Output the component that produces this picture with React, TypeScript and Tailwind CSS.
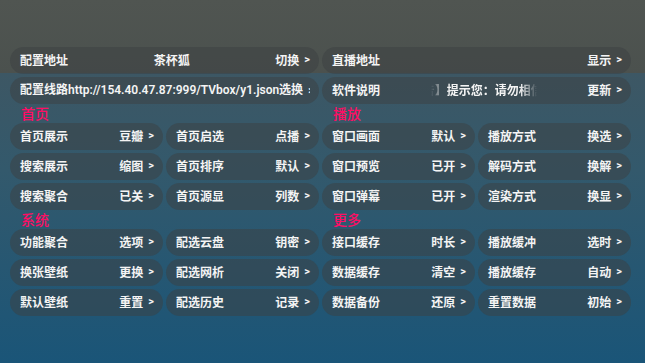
import React from "react";

type Item = { label: string; value: string };

const FONT = "font-['Roboto','Noto_Sans_CJK_SC',sans-serif]";

function Arrow() {
  return <span className="ml-[5px] text-[11px] font-bold">&gt;</span>;
}

const PILL =
  "flex h-[27px] items-center rounded-full bg-[#3b3f42]/50 pl-[10px] pr-[9px] text-[12px] font-semibold text-[#f4f4f4]";

function Pill({ label, value }: Item) {
  return (
    <div className={PILL}>
      <span className="whitespace-nowrap">{label}</span>
      <span className="flex-1" />
      <span className="flex items-center whitespace-nowrap">
        {value}
        <Arrow />
      </span>
    </div>
  );
}

function SectionLabel({ text }: { text: string }) {
  return (
    <div className="col-span-2 h-[13px] pl-[11px] text-[14px] leading-[14px] font-medium text-[#ff0d64]">
      {text}
    </div>
  );
}

const block1: Item[][] = [
  [
    { label: "首页展示", value: "豆瓣" },
    { label: "首页启选", value: "点播" },
    { label: "窗口画面", value: "默认" },
    { label: "播放方式", value: "换选" },
  ],
  [
    { label: "搜索展示", value: "缩图" },
    { label: "首页排序", value: "默认" },
    { label: "窗口预览", value: "已开" },
    { label: "解码方式", value: "换解" },
  ],
  [
    { label: "搜索聚合", value: "已关" },
    { label: "首页源显", value: "列数" },
    { label: "窗口弹幕", value: "已开" },
    { label: "渲染方式", value: "换显" },
  ],
];

const block2: Item[][] = [
  [
    { label: "功能聚合", value: "选项" },
    { label: "配选云盘", value: "钥密" },
    { label: "接口缓存", value: "时长" },
    { label: "播放缓冲", value: "选时" },
  ],
  [
    { label: "换张壁纸", value: "更换" },
    { label: "配选网析", value: "关闭" },
    { label: "数据缓存", value: "清空" },
    { label: "播放缓存", value: "自动" },
  ],
  [
    { label: "默认壁纸", value: "重置" },
    { label: "配选历史", value: "记录" },
    { label: "数据备份", value: "还原" },
    { label: "重置数据", value: "初始" },
  ],
];

export default function App() {
  return (
    <div
      className={`h-[363px] w-[645px] overflow-hidden bg-[linear-gradient(180deg,#505551_0px,#4b514e_73px,#3d5764_73px,#33596c_170px,#1a5578_363px)] ${FONT}`}
    >
      <div className="grid grid-cols-4 gap-x-[3px] gap-y-[3px] pl-[10px] pr-[14px] pt-[47px]">
        {/* row 1 */}
        <div className={`col-span-2 ${PILL}`}>
          <span className="whitespace-nowrap">配置地址</span>
          <span className="flex-1 text-center whitespace-nowrap">茶杯狐</span>
          <span className="flex items-center whitespace-nowrap">
            切换
            <Arrow />
          </span>
        </div>
        <div className={`col-span-2 ${PILL}`}>
          <span className="whitespace-nowrap">直播地址</span>
          <span className="flex-1" />
          <span className="flex items-center whitespace-nowrap">
            显示
            <Arrow />
          </span>
        </div>

        {/* row 2 */}
        <div className={`col-span-2 ${PILL}`}>
          <div className="min-w-0 flex-1 overflow-hidden whitespace-nowrap">
            配置线路http://154.40.47.87:999/TVbox/y1.json选换
            <span className="ml-[5px] text-[11px] font-bold">&gt;</span>
          </div>
        </div>
        <div className={`col-span-2 ${PILL}`}>
          <span className="whitespace-nowrap">软件说明</span>
          <div className="flex min-w-0 flex-1 justify-center">
            <div className="w-[106px] overflow-hidden whitespace-nowrap [mask-image:linear-gradient(to_right,transparent_0%,black_16%,black_84%,transparent_100%)]">
              <span className="-ml-[8px] inline-block">告】提示您：请勿相信</span>
            </div>
          </div>
          <span className="flex items-center whitespace-nowrap">
            更新
            <Arrow />
          </span>
        </div>

        <SectionLabel text="首页" />
        <SectionLabel text="播放" />
        {block1.flat().map((it, i) => (
          <Pill key={"a" + i} {...it} />
        ))}

        <SectionLabel text="系统" />
        <SectionLabel text="更多" />
        {block2.flat().map((it, i) => (
          <Pill key={"b" + i} {...it} />
        ))}
      </div>
    </div>
  );
}
